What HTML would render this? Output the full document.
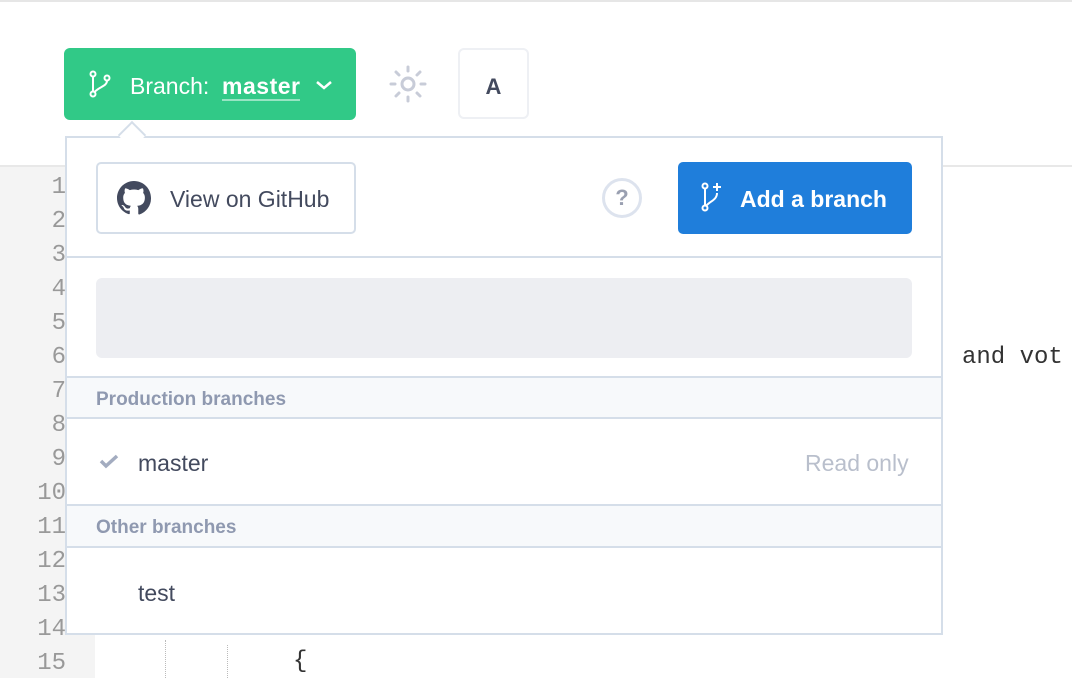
<!DOCTYPE html>
<html><head><style>
body{margin:0;width:1072px;height:678px;overflow:hidden;background:#fff;font-family:"Liberation Sans",sans-serif;position:relative}
.abs{position:absolute}
.ln{position:absolute;right:1006px;font-family:"Liberation Mono",monospace;font-size:24px;color:#999;text-align:right}
</style></head><body>
<div class="abs" style="left:0;top:0;width:1072px;height:2px;background:#e6e6e6"></div>
<div class="abs" style="left:0;top:165px;width:1072px;height:2px;background:#e8e8e8"></div>
<div class="abs" style="left:0;top:167px;width:95px;height:511px;background:#f4f4f4"></div>
<div class="ln" style="top:174px">1</div><div class="ln" style="top:208px">2</div><div class="ln" style="top:242px">3</div><div class="ln" style="top:276px">4</div><div class="ln" style="top:310px">5</div><div class="ln" style="top:344px">6</div><div class="ln" style="top:378px">7</div><div class="ln" style="top:412px">8</div><div class="ln" style="top:446px">9</div><div class="ln" style="top:480px">10</div><div class="ln" style="top:514px">11</div><div class="ln" style="top:548px">12</div><div class="ln" style="top:582px">13</div><div class="ln" style="top:616px">14</div><div class="ln" style="top:650px">15</div>
<div class="abs" style="left:962px;top:344px;font-family:'Liberation Mono',monospace;font-size:24px;color:#333">and vot</div>
<div class="abs" style="left:293px;top:648px;font-family:'Liberation Mono',monospace;font-size:24px;color:#333">{</div>
<div class="abs" style="left:165px;top:640px;height:38px;border-left:1px dotted #bbb"></div>
<div class="abs" style="left:227px;top:645px;height:33px;border-left:1px dotted #bbb"></div>

<div class="abs" style="left:64px;top:48px;width:292px;height:72px;background:#31c987;border-radius:6px"></div>
<svg class="abs" style="left:88px;top:70px" width="26" height="28" viewBox="0 0 26 28" fill="none" stroke="#fff" stroke-width="2"><circle cx="5" cy="4" r="2.5"/><circle cx="5" cy="24" r="2.5"/><circle cx="19" cy="8" r="2.5"/><path d="M5 6.5V21.5M19 10.5c0 6-8 6-13 12"/></svg>
<div class="abs" style="left:130px;top:73px;font-size:23px;color:#fff">Branch:&nbsp; <b style="border-bottom:2px solid rgba(255,255,255,.5);font-weight:bold;letter-spacing:0.5px">master</b></div>
<svg class="abs" style="left:314px;top:78px" width="20" height="14"><path d="M3 4l7 6 7-6" stroke="#fff" stroke-width="2.5" fill="none"/></svg>
<svg class="abs" style="left:386px;top:62px" width="44" height="44" viewBox="0 0 44 44" stroke="#c8ccd8" stroke-width="3" stroke-linecap="round" fill="none"><circle cx="22" cy="22" r="6"/><path d="M22 5v4M22 35v4M5 22h4M35 22h4M10 10l3 3M31 31l3 3M34 10l-3 3M13 31l-3 3"/></svg>
<div class="abs" style="left:458px;top:48px;width:71px;height:71px;border:2px solid #eef0f4;border-radius:6px;box-sizing:border-box;text-align:center;line-height:74px;font-weight:bold;font-size:22px;color:#434a5e">A</div>

<div class="abs" style="left:65px;top:136px;width:878px;height:499px;border:2px solid #d5dee9;box-sizing:border-box;background:#fff"></div>
<div class="abs" style="left:122px;top:125px;width:18px;height:18px;background:#fff;border-left:2px solid #d5dee9;border-top:2px solid #d5dee9;transform:rotate(45deg)"></div>
<div class="abs" style="left:96px;top:162px;width:260px;height:72px;border:2px solid #d5dee9;border-radius:5px;box-sizing:border-box"></div>
<svg class="abs" style="left:117px;top:181px" width="34" height="34" viewBox="0 0 16 16"><path fill="#434a5e" d="M8 0C3.58 0 0 3.58 0 8c0 3.54 2.29 6.530 5.47 7.59.4.07.55-.17.55-.38v-1.34c-2.23.48-2.69-.94-2.69-.94-.36-.92-.89-1.170-.89-1.17-.73-.5.05-.49.05-.49.8.06 1.23.83 1.23.83.71 1.22 1.87.87 2.33.66.07-.52.28-.87.51-1.07-1.78-.2-3.64-.89-3.64-3.95 0-.87.31-1.59.82-2.15-.08-.2-.36-1.02.08-2.12 0 0 .67-.21 2.2.82.64-.18 1.32-.27 2-.27.68 0 1.36.09 2 .27 1.53-1.04 2.2-.82 2.2-.82.44 1.1.16 1.92.08 2.12.51.56.82 1.27.82 2.15 0 3.07-1.87 3.75-3.65 3.95.29.25.54.73.54 1.48v2.2c0 .21.15.46.55.38A8.013 8.013 0 0016 8c0-4.42-3.58-8-8-8z"/></svg>
<div class="abs" style="left:170px;top:186px;font-size:23px;color:#434a5e">View on GitHub</div>
<div class="abs" style="left:602px;top:178px;width:34px;height:34px;border:3px solid #dde3ee;border-radius:50%;text-align:center;line-height:34px;font-weight:bold;font-size:22px;color:#9aa0b1">?</div>
<div class="abs" style="left:678px;top:162px;width:234px;height:72px;background:#1f7edb;border-radius:5px"></div>
<svg class="abs" style="left:700px;top:181px" width="26" height="32" viewBox="0 0 26 32" fill="none" stroke="#fff" stroke-width="2"><circle cx="5" cy="5" r="2.5"/><circle cx="5" cy="27" r="2.5"/><path d="M5 7.5V24.5M17 12c0 7-7 8-11 13M17 2v8M13 6h8"/></svg>
<div class="abs" style="left:740px;top:186px;font-size:23px;font-weight:bold;color:#fff">Add a branch</div>
<div class="abs" style="left:67px;top:256px;width:874px;height:2px;background:#d5dee9"></div>
<div class="abs" style="left:96px;top:278px;width:816px;height:80px;background:#edeef2;border-radius:6px"></div>
<div class="abs" style="left:67px;top:376px;width:874px;height:43px;background:#f7f9fb;border-top:2px solid #d5dee9;border-bottom:2px solid #d5dee9;box-sizing:border-box"></div>
<div class="abs" style="left:96px;top:389px;font-size:19px;font-weight:bold;color:#8f99b0">Production branches</div>
<svg class="abs" style="left:99px;top:453px" width="20" height="16"><path d="M2 8l5 5 11-10" stroke="#a3acc0" stroke-width="3.5" fill="none"/></svg>
<div class="abs" style="left:138px;top:450px;font-size:23px;color:#434a5e">master</div>
<div class="abs" style="left:805px;top:450px;font-size:23px;color:#b9bfcc">Read only</div>
<div class="abs" style="left:67px;top:504px;width:874px;height:44px;background:#f7f9fb;border-top:2px solid #d5dee9;border-bottom:2px solid #d5dee9;box-sizing:border-box"></div>
<div class="abs" style="left:96px;top:517px;font-size:19px;font-weight:bold;color:#8f99b0">Other branches</div>
<div class="abs" style="left:138px;top:580px;font-size:23px;color:#434a5e">test</div>
</body></html>
